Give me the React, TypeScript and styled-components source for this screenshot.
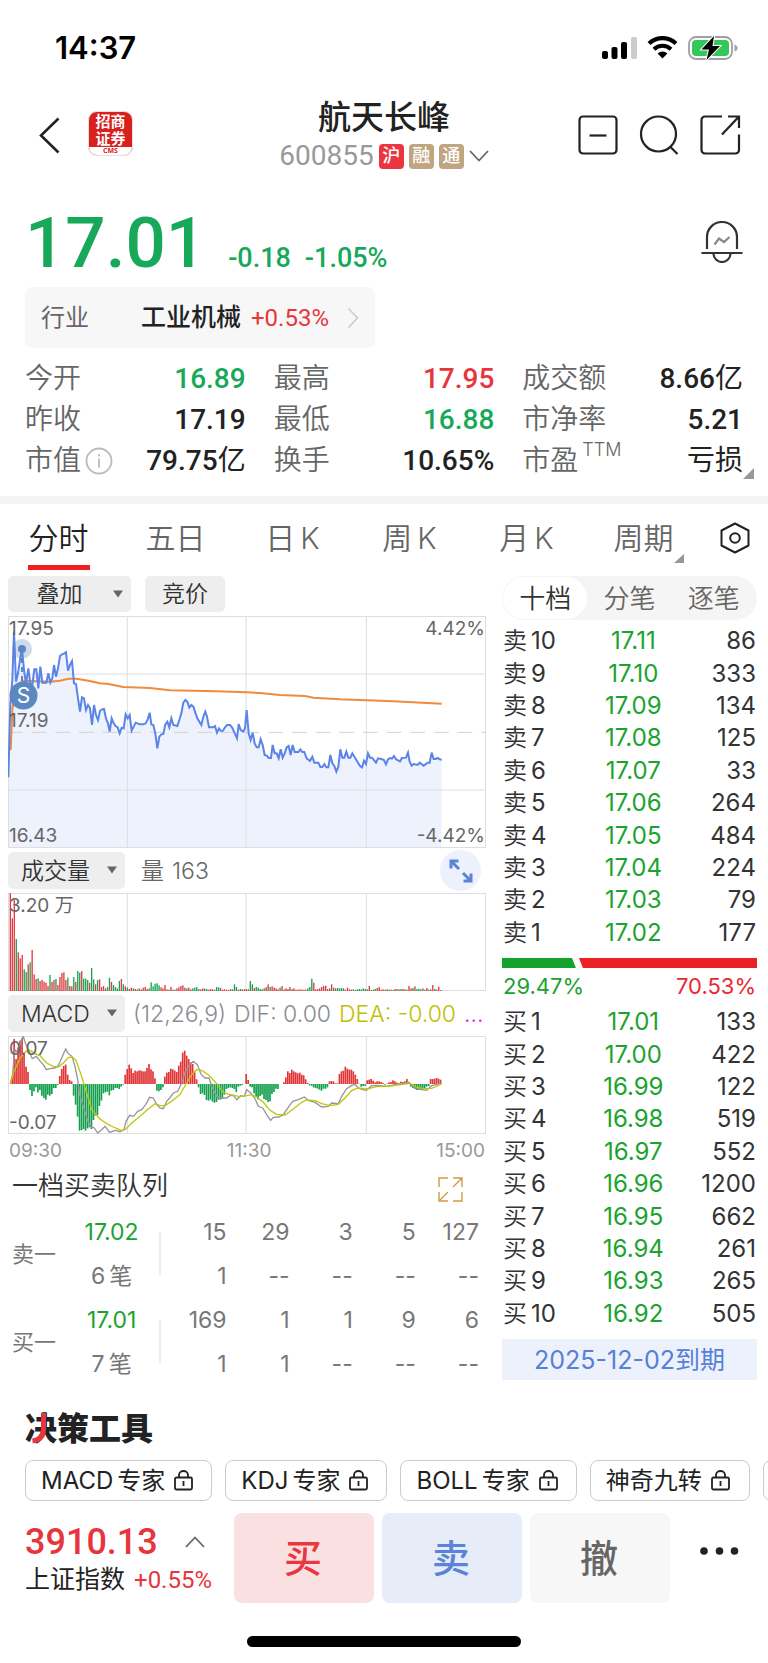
import React from "react";
import styled, { createGlobalStyle, css } from "styled-components";

const GREEN = "#17a85a";
const BOOK_GREEN = "#1ba32f";
const RED = "#e8353c";
const INK = "#222222";
const MUTED = "#666666";
const CJK = `"Noto Sans CJK SC", sans-serif`;
const UI = `Inter, ${CJK}`;
const QUOTE = `Roboto, ${CJK}`;

const Global = createGlobalStyle`
  *, *::before, *::after { box-sizing: border-box; }
  body { margin: 0; background: #fff; color: ${INK}; font-family: ${QUOTE}; }
  button, select { font: inherit; color: inherit; border: 0; background: none; padding: 0; margin: 0; cursor: pointer; }
  svg { display: block; flex: none; }
  a { color: inherit; text-decoration: none; }
  table { border-collapse: collapse; width: 100%; }
  td, th { padding: 0; font-weight: 400; }
`;

const Page = styled.main`
  width: 100%;
  overflow: hidden;
  background: #fff;
`;

/* ---------- status bar and header ---------- */

const StatusBar = styled.div`
  display: flex;
  align-items: center;
  justify-content: space-between;
  height: 95px;
  padding: 0 30px 0 55px;
  font: 600 31px/36px ${UI};
  color: #000;
`;

const StatusIcons = styled.div`
  display: flex;
  align-items: center;
  gap: 10px;
`;

const Header = styled.header`
  display: grid;
  grid-template-columns: 1fr auto 1fr;
  align-items: center;
  height: 80px;
`;

const HeaderLeft = styled.div`
  display: flex;
  align-items: center;
  gap: 28px;
  padding-left: 39px;
`;

const HeaderMiddle = styled.div`
  padding-top: 4px;
`;

const HeaderRight = styled.div`
  display: flex;
  align-items: center;
  justify-content: flex-end;
  gap: 21px;
  padding-right: 27px;
`;

const Logo = styled.span`
  display: flex;
  flex-direction: column;
  width: 45px;
  height: 45px;
  margin-bottom: 3px;
  overflow: hidden;
  border: 1px solid #e6dede;
  border-radius: 9px;
  background: #d8201f;
  color: #fff;
  font: 700 15px/17px ${CJK};
  text-align: center;
`;

const LogoText = styled.span`
  flex: 1;
`;

const LogoFoot = styled.span`
  height: 8px;
  background: #fff;
  color: #d8201f;
  font: 700 7px/7px "Open Sans", sans-serif;
`;

const Title = styled.h1`
  margin: 0;
  font-size: 33px;
  line-height: 38px;
  font-weight: 500;
  text-align: center;
`;

const CodeRow = styled.button`
  display: flex;
  align-items: center;
  gap: 5px;
  height: 38px;
  color: #999;
  font-size: 28px;
  line-height: 36px;
`;

const Tag = styled.span<{ $red?: boolean }>`
  width: 25px;
  height: 25px;
  border-radius: 4px;
  background: ${(p) => (p.$red ? "#ea3640" : "#c0a582")};
  color: #fff;
  font-size: 18px;
  line-height: 24px;
  font-weight: 500;
  text-align: center;
`;

/* ---------- quote ---------- */

const PriceRow = styled.section`
  display: flex;
  align-items: baseline;
  gap: 14px;
  padding: 28px 25px 4px;
  color: ${GREEN};
  font-weight: 500;
  font-size: 27px;
  line-height: 40px;
`;

const Price = styled.span`
  margin-right: 8px;
  font-size: 71px;
  line-height: 80px;
`;

const BellButton = styled.button`
  align-self: flex-end;
  margin-left: auto;
  padding-bottom: 20px;
`;

const Industry = styled.a`
  display: flex;
  align-items: center;
  width: 350px;
  height: 61px;
  margin-left: 25px;
  padding: 0 16px;
  border-radius: 8px;
  background: #f7f7f7;
  font-size: 24px;
  line-height: 36px;
`;

const IndustryLabel = styled.span`
  flex: 1;
  color: ${MUTED};
`;

const Strong = styled.span`
  font-size: 25px;
  font-weight: 500;
`;

const Gain = styled.span`
  margin: 0 18px 0 10px;
  color: ${RED};
`;

const Stats = styled.dl`
  display: grid;
  grid-template-columns: repeat(3, 1fr);
  column-gap: 28px;
  margin: 0;
  padding: 10px 25px 15px;
  font-size: 28px;
  line-height: 41px;
`;

const Stat = styled.div`
  position: relative;
  display: flex;
  justify-content: space-between;
  height: 41px;
  white-space: nowrap;
`;

const StatLabel = styled.dt`
  display: flex;
  align-items: center;
  gap: 4px;
  color: ${MUTED};
  font-weight: 350;
`;

const StatValue = styled.dd<{ $color?: string }>`
  margin: 0;
  font-weight: 500;
  color: ${(p) => p.$color ?? INK};
`;

const Thin = styled.span`
  font-weight: 400;
`;

const Super = styled.sup`
  align-self: flex-start;
  font: 300 18px/20px ${UI};
`;

const Corner = styled.svg`
  position: absolute;
  right: -11px;
  bottom: 2px;
`;

/* ---------- period tabs ---------- */

const Tabs = styled.nav`
  display: flex;
  height: 76px;
  border-top: 8px solid #f4f4f4;
`;

const Tab = styled.button<{ $active?: boolean }>`
  position: relative;
  flex: 1;
  color: ${(p) => (p.$active ? INK : MUTED)};
  font: 350 30px/40px ${UI};
  ${(p) =>
    p.$active &&
    css`
      &::after {
        content: "";
        position: absolute;
        left: calc(50% - 31px);
        bottom: 2px;
        width: 62px;
        height: 5px;
        background: #f02020;
      }
    `}
`;

const TabMark = styled.svg`
  position: absolute;
  right: 18px;
  bottom: 9px;
`;

const GapK = styled.span`
  margin-left: 5px;
`;

const SettingsButton = styled.button`
  display: flex;
  justify-content: center;
  align-items: center;
  width: 66px;
`;

/* ---------- chart side ---------- */

const Body = styled.section`
  display: grid;
  grid-template-columns: 478fr 255fr;
  column-gap: 16px;
  padding: 4px 11px 0 8px;
`;

const Column = styled.div`
  min-width: 0;
`;

const ToolRow = styled.div`
  display: flex;
  align-items: center;
  gap: 14px;
  height: 36px;
  margin-bottom: 4px;
  color: ${MUTED};
  font: 350 23px/36px ${UI};
  white-space: nowrap;
`;

const SubToolRow = styled(ToolRow)`
  height: 37px;
  margin-top: 4px;
  gap: 8px;
`;

const Picker = styled.span<{ $w: number }>`
  position: relative;
  display: block;
  width: ${(p) => p.$w}px;
  height: 100%;
  flex: none;
  border-radius: 5px;
  background: #eee;
  color: #333;
  select {
    appearance: none;
    width: 100%;
    height: 100%;
    padding: 0 26px 0 13px;
    font: 350 23px/32px ${UI};
  }
  svg {
    position: absolute;
    right: 8px;
    top: 14px;
    pointer-events: none;
  }
`;

const CenteredPicker = styled(Picker)`
  select {
    padding: 0 30px 0 10px;
    text-align: center;
    text-align-last: center;
  }
`;

const GreyButton = styled.button`
  width: 80px;
  height: 100%;
  border-radius: 5px;
  background: #eee;
  color: #333;
`;

const VolumeNow = styled.span`
  display: flex;
  gap: 8px;
  padding-left: 8px;
`;

const ExpandButton = styled.button`
  display: flex;
  align-items: center;
  justify-content: center;
  width: 41px;
  height: 41px;
  margin: -2px 5px -2px auto;
  border-radius: 50%;
  background: #ecf1fc;
`;

const Legend = styled.span<{ $color: string }>`
  color: ${(p) => p.$color};
`;

const ChartBox = styled.div<{ $h: number }>`
  position: relative;
  height: ${(p) => p.$h}px;
`;

const Plot = styled.svg`
  width: 100%;
  height: 100%;
`;

const ChartLabel = styled.span<{ $top?: number; $bottom?: number; $right?: boolean }>`
  position: absolute;
  ${(p) => (p.$right ? "right: 1px;" : "left: 1px;")}
  ${(p) => (p.$bottom !== undefined ? `bottom: ${p.$bottom}px;` : `top: ${p.$top ?? 1}px;`)}
  color: ${MUTED};
  font: 400 19px/24px ${UI};
`;

const TradeMark = styled.svg`
  position: absolute;
  left: 0;
  top: 22px;
`;

const Axis = styled.div`
  display: flex;
  justify-content: space-between;
  height: 34px;
  padding: 0 1px;
  color: #999;
  font: 400 19px/34px ${UI};
`;

const QueueHead = styled.div`
  display: flex;
  justify-content: space-between;
  height: 42px;
  padding: 0 23px 0 4px;
`;

const QueueTitle = styled.h2`
  margin: 0;
  color: #333;
  font: 350 26px/32px ${CJK};
`;

const QueueTable = styled.table`
  width: calc(100% - 7px);
  table-layout: fixed;
  color: #777;
  font: 400 23px/44px ${UI};
  td {
    height: 44px;
    text-align: right;
  }
`;

const QueueSide = styled.th`
  padding-left: 4px;
  text-align: left;
  font-size: 22px;
`;

const QueueMid = styled.td<{ $green?: boolean }>`
  && {
    text-align: center;
  }
  color: ${(p) => (p.$green ? BOOK_GREEN : "inherit")};
`;

const Rule = styled.span`
  display: block;
  width: 2px;
  height: 44px;
  background: #eee;
`;

/* ---------- order book ---------- */

const Segments = styled.div`
  display: grid;
  grid-template-columns: repeat(3, 1fr);
  height: 44px;
  margin-bottom: 5px;
  padding: 1px;
  border-radius: 22px;
  background: #f5f5f5;
`;

const Segment = styled.button<{ $active?: boolean }>`
  padding-bottom: 2px;
  border-radius: 21px;
  background: ${(p) => (p.$active ? "#fff" : "transparent")};
  color: ${(p) => (p.$active ? "#333" : MUTED)};
  font: 350 26px/36px ${CJK};
`;

const BookTable = styled.table`
  table-layout: fixed;
  height: 324px;
  color: #333;
  font: 400 24px/32px ${UI};
`;

const Side = styled.th`
  width: 34%;
  padding-left: 1px;
  text-align: left;
  font-weight: 350;
`;

const Num = styled.span`
  margin-left: 4px;
  font-weight: 400;
`;

const BookPrice = styled.td`
  width: 35%;
  color: ${BOOK_GREEN};
  text-align: center;
`;

const Qty = styled.td`
  padding-right: 1px;
  text-align: right;
`;

const Ratio = styled.div`
  display: flex;
  gap: 3px;
  height: 10px;
  margin-top: 9px;
`;

const SellShare = styled.span`
  width: 29%;
  background: #16a12c;
  clip-path: polygon(0 0, calc(100% - 4px) 0, 100% 100%, 0 100%);
`;

const BuyShare = styled.span`
  flex: 1;
  background: #ea2024;
  clip-path: polygon(0 0, 100% 0, 100% 100%, 4px 100%);
`;

const RatioText = styled.div`
  display: flex;
  justify-content: space-between;
  height: 38px;
  padding: 0 1px;
  font: 400 22px/36px ${UI};
`;

const Tone = styled.span<{ $c: string }>`
  color: ${(p) => p.$c};
`;

const Expiry = styled.button`
  display: block;
  width: 100%;
  height: 41px;
  margin-top: 9px;
  background: #ecf1fc;
  color: #5780d8;
  font: 400 25px/36px ${UI};
`;

/* ---------- tools and trade bar ---------- */

const ToolsTitle = styled.h2`
  position: relative;
  margin: 22px 0 16px;
  padding-left: 25px;
  font: 900 32px/36px ${CJK};
`;

const Accent = styled.svg`
  position: absolute;
  left: 31px;
  top: 5px;
`;

const Chips = styled.div`
  display: flex;
  gap: 13px;
  padding-left: 25px;
  overflow: hidden;
`;

const Chip = styled.button`
  display: flex;
  align-items: center;
  flex: none;
  gap: 9px;
  min-width: 160px;
  height: 41px;
  padding: 0 18px 0 15px;
  border: 1px solid #ccc;
  border-radius: 8px;
  font: 400 24px/36px ${UI};
  white-space: nowrap;
`;

const ChipText = styled.span`
  display: flex;
  gap: 4px;
`;

const TradeBar = styled.footer`
  display: flex;
  gap: 8px;
  height: 90px;
  margin-top: 12px;
`;

const IndexLink = styled.a`
  flex: none;
  width: 226px;
  padding: 8px 0 0 25px;
`;

const IndexTop = styled.span`
  display: flex;
  align-items: center;
  gap: 27px;
  height: 42px;
  color: ${RED};
  font-size: 36px;
  line-height: 42px;
  font-weight: 500;
`;

const IndexBottom = styled.span`
  display: flex;
  gap: 9px;
  font-size: 24px;
  line-height: 34px;
`;

const IndexName = styled.span`
  font-size: 25px;
`;

const TradeButton = styled.button<{ $bg: string; $fg: string }>`
  flex: 1;
  padding: 0 2px 4px 0;
  border-radius: 8px;
  background: ${(p) => p.$bg};
  color: ${(p) => p.$fg};
  font: 500 38px/48px ${CJK};
`;

const MoreButton = styled.button`
  display: flex;
  align-items: center;
  justify-content: center;
  width: 90px;
  padding: 0 8px 14px 0;
`;

const HomeBar = styled.div`
  width: 274px;
  height: 11px;
  margin: 33px auto 16px;
  border-radius: 6px;
  background: #000;
`;

/* ---------- data ---------- */

type Pt = [number, number];

const toPoints = (pts: Pt[]) => pts.map(([x, y]) => `${x},${y}`).join(" ");
const pairs = (s: string, dx: number, dy: number): Pt[] =>
  s
    .trim()
    .split(/\s+/)
    .map((p) => {
      const [x, y] = p.split(",").map(Number);
      return [x + dx, y + dy] as Pt;
    });

const priceLine: Pt[] = [
  ...pairs(
    `25,502 31,280 37,210 42,65 48,215 54,190 60,150 66,115 72,180 78,222 85,175 91,220 97,225 103,178 109,178 115,235
     121,170 127,218 139,218 145,190 151,218 157,205 162,165 168,200 174,175 180,138 186,133 192,131 198,127 204,182
     210,165 216,153 222,220 228,222 234,265 240,305 246,262 252,265 258,300 264,285 270,295 276,345 282,285 288,315
     294,330 300,303 306,298 312,297 318,325 324,340 329,365 335,325 341,340 347,348 353,352 359,370 365,353 371,355
     377,313 383,325 389,315 395,362 401,350 407,338 419,343 431,343 437,340 443,328 449,308 454,343 460,345 466,370
     472,415 478,380 484,373 490,372 496,343 502,335 508,352 514,325 520,345 532,348 538,330 544,310 550,278 556,270
     562,275 568,293 574,285 580,290 586,308 592,325 598,335 604,345 610,320 616,305 621,320 627,352 639,352 645,348
     651,368 657,355 663,363 669,362 675,352 681,345 690,345 696,352 702,365 711,385 716,342 722,360 730,365 735,355`,
    -24,
    -18
  ),
  ...pairs(
    `20,300 26,370 32,390 38,368 44,400 50,412 56,412 62,388 68,405 74,435 80,437 86,444 93,444 98,405 104,430 110,430
     116,445 122,418 128,443 134,430 140,412 146,408 152,435 158,405 164,426 175,426 181,418 187,426 193,426 200,445
     210,453 217,440 223,458 235,458 241,471 247,471 253,462 259,472 265,472 271,435 277,460 283,468 289,485 295,470
     301,418 307,443 313,443 319,425 325,443 331,443 337,430 349,450 360,468 366,472 372,452 378,462 384,430 390,443
     396,443 408,458 414,445 426,448 432,450 438,463 444,448 450,444 456,446 462,438 468,448 480,454 486,444 498,443
     504,428 509,455 515,467 521,462 533,465 539,458 551,467 563,458 569,458 575,428 581,447 587,447 593,444 599,448 605,449`,
    696,
    -18
  ),
];

const averageLine: Pt[] = pairs(
  `32,420 37,300 45,235 60,218 70,212 150,215 180,212 205,206 230,206 265,212 300,220 325,222 370,231 450,234 510,241
   650,244 740,247 780,249 840,255 915,258 940,263 1020,268 1100,271 1180,274 1325,281`,
  -24,
  -18
);

const difLine: Pt[] = [
  ...pairs(
    `31,700 37,680 45,600 55,610 62,575 70,560 76,580 85,600 97,627 109,620 121,635 130,645 139,660 150,657 165,655
     175,648 185,625 197,598 205,612 216,620 225,650 233,690 239,735 250,770 262,810 272,830 283,835 293,850 305,840
     315,830 329,848 345,842 360,846 372,840 378,815 389,797 401,800 413,785 425,780 437,765 449,743 460,745 470,765
     480,775 490,777 500,755 509,745 520,730 533,725 545,700 556,665 568,645 580,635 592,645 604,675 615,685 627,685
     637,715 650,740 665,745 680,745 690,738 700,737 711,750 722,738 733,740`,
    -24,
    -559
  ),
  ...pairs(
    `20,630 32,640 44,655 55,680 68,685 80,705 92,722 100,713 116,712 130,705 140,690 158,665 175,660 193,652 205,662
     225,668 245,682 265,680 275,670 295,672 305,650 320,627 335,617 345,614 355,625 367,630 379,632 395,618 410,617
     440,620 470,614 505,608 520,622 535,628 560,632 575,618 590,614 605,610`,
    696,
    -469
  ),
];

const deaLine: Pt[] = [
  ...pairs(
    `31,703 40,670 60,625 78,605 90,602 105,612 120,618 140,640 160,650 175,652 190,640 205,624 217,622 228,632 245,680
     260,730 275,780 300,808 320,822 340,832 365,843 378,838 395,820 420,800 445,778 465,762 480,768 495,768 510,758
     540,735 560,700 575,675 590,660 605,662 625,675 650,702 670,728 690,735 720,741`,
    -24,
    -559
  ),
  ...pairs(
    `20,648 35,645 50,652 70,668 90,692 110,704 135,706 160,688 185,668 200,661 225,663 245,672 270,678 295,674 315,655
     335,633 355,625 380,628 410,621 450,619 510,611 530,622 550,627 575,626 605,613`,
    696,
    -469
  ),
];

/* One bar a minute; a negative volume is a falling minute. */
const volumes = [
  294, 218, 273, -156, 116, 98, 108, -65, -57, 80, -86, 123, 50, 36, -38, 30, 33, 28, 25, 15, -48, 27, 33, -36, 18, 42,
  54, 56, 33, -40, 15, 14, -42, 27, -60, -55, 60, -37, -37, -33, 25, -69, -35, 20, -33, 35, 12, 15, 8, -12, -40, 27,
  -18, -12, -8, -30, 36, -20, 14, -10, 6, 10, -8, 6, 5, -8, 5, 10, 12, 6, -8, -26, -14, -22, -23, -17, 11, 8, 18, 5, -4,
  12, 4, -4, 8, 11, 15, 17, 10, -8, 10, 5, -8, -10, -12, -6, 5, 8, -7, -6, 4, 6, 5, -4, -12, -11, 9, 4, 5, 4, 3, -6,
  5, -20, -12, 4, -6, 5, -5, 6, 5, -30, -20, 9, -12, -10, -6, 5, -8, 12, 20, -12, 14, 10, 8, 5, -10, 15, 5, 8, 6, 12,
  -6, 8, 4, 4, 5, 4, 4, 4, -8, -12, -37, 25, 5, 6, 8, 12, 15, 16, -6, 8, 20, -10, 8, -9, -8, -9, -8, 4, 10, 5, 4, -5, 3,
  -5, -6, -5, -8, -6, 5, 15, -3, -4, -6, 9, 12, 4, 5, -4, 5, -4, 4, -3, 6, -6, 5, -6, 6, 5, -4, 15, 8, -9, 14, -6, -7,
  5, -8, 4, 9, -4, 5, 18, -6, 4, 13, 3,
];

const macdBars = [
  0, 22, 135, 75, 110, 130, 138, 93, 52, 36, -18, -36, -22, -10, -25, -18, -35, -42, -47, -32, -35, -30, -12, -12, -3,
  24, 45, 54, 58, 28, 12, 8, -35, -62, -98, -140, -138, -135, -140, -133, -130, -135, -108, -95, -93, -66, -50, -28,
  -25, -23, -34, -20, -18, -12, -12, -15, -8, -2, 28, 45, 58, 47, 33, 40, 38, 41, 40, 38, 38, 48, 60, 44, 38, 17, -20,
  -22, -18, -10, 22, 34, 36, 46, 44, 40, 36, 55, 67, 94, 100, 85, 75, 65, 60, 36, 14, -10, -30, -28, -33, -48, -50, -47,
  -53, -56, -54, -47, -47, -43, -32, -15, -12, -10, -12, -15, -24, -8, -5, -3, 0, 30, 12, -8, -10, -28, -38, -46, -36,
  -32, -45, -48, -54, -52, -30, -24, -14, -15, 0, 0, 5, 20, 38, 33, 43, 38, 35, 32, 34, 28, 26, 14, 3, -4, -5, -10, -12,
  -14, -17, -20, -14, -14, -10, 8, 9, 8, 2, 2, 30, 38, 40, 52, 46, 43, 43, 38, 28, 15, 1, -8, -6, -5, 11, 13, 15, 10, 5,
  8, 8, 6, 3, -2, 1, 5, 6, 11, 8, 4, 3, 7, 6, 8, 15, 5, -8, -12, -15, -18, -17, -15, -15, -13, -8, -6, 15, 15, 16, 18,
  16, 13,
];

const STEP = 5.95;

const sells: [string, string, string][] = [
  ["10", "17.11", "86"],
  ["9", "17.10", "333"],
  ["8", "17.09", "134"],
  ["7", "17.08", "125"],
  ["6", "17.07", "33"],
  ["5", "17.06", "264"],
  ["4", "17.05", "484"],
  ["3", "17.04", "224"],
  ["2", "17.03", "79"],
  ["1", "17.02", "177"],
];

const buys: [string, string, string][] = [
  ["1", "17.01", "133"],
  ["2", "17.00", "422"],
  ["3", "16.99", "122"],
  ["4", "16.98", "519"],
  ["5", "16.97", "552"],
  ["6", "16.96", "1200"],
  ["7", "16.95", "662"],
  ["8", "16.94", "261"],
  ["9", "16.93", "265"],
  ["10", "16.92", "505"],
];

const queues = [
  { side: "卖一", price: "17.02", count: "6", a: ["15", "29", "3", "5", "127"], b: ["1", "--", "--", "--", "--"] },
  { side: "买一", price: "17.01", count: "7", a: ["169", "1", "1", "9", "6"], b: ["1", "1", "--", "--", "--"] },
];

/* ---------- small parts ---------- */

const Grid = ({ h, rows }: { h: number; rows?: boolean }) => (
  <g stroke="#dedee2" strokeWidth="3" fill="none">
    <rect x="1.5" y="1.5" width="1431" height={h - 3} />
    <path d={`M358 0V${h}M714 0V${h}M1075 0V${h}`} />
    {rows && <path d="M0 174H1434M0 522H1434" />}
    {rows && <path d="M0 349H1434" stroke="#d2d2d6" strokeDasharray="44 27" />}
  </g>
);

const Arrow = () => (
  <svg width="10" height="8" viewBox="0 0 10 8">
    <path d="M0 0.5H10L5 7.5Z" fill="#666" />
  </svg>
);

const Lock = () => (
  <svg width="19" height="21" viewBox="0 0 19 21" fill="none" stroke="#222" strokeWidth="1.8">
    <rect x="1" y="7.5" width="17" height="12" rx="1.5" />
    <path d="M5 7.5V5a4.5 4 0 0 1 9 0v2.5M9.5 11v5" />
  </svg>
);

const Book = ({ name, rows }: { name: string; rows: [string, string, string][] }) => (
  <BookTable>
    <tbody>
      {rows.map(([n, price, qty]) => (
        <tr key={n}>
          <Side scope="row">
            {name}
            <Num>{n}</Num>
          </Side>
          <BookPrice>{price}</BookPrice>
          <Qty>{qty}</Qty>
        </tr>
      ))}
    </tbody>
  </BookTable>
);

const tools: [string, string][] = [
  ["MACD", "专家"],
  ["KDJ", "专家"],
  ["BOLL", "专家"],
  ["", "神奇九转"],
];

export default function App() {
  return (
    <Page>
      <Global />
      <StatusBar>
        <span>14:37</span>
        <StatusIcons>
          <svg width="35" height="22" viewBox="0 0 35 22">
            <rect x="0" y="14" width="6" height="8" rx="2" />
            <rect x="9.500" y="10" width="6" height="12" rx="2" />
            <rect x="19" y="5" width="6" height="17" rx="2" />
            <rect x="29" y="0" width="6" height="22" rx="2" fill="#ccc" />
          </svg>
          <svg width="31" height="23" viewBox="0 0 31 23">
            <path d="M2 7.500a19.500 19.500 0 0 1 27 0" fill="none" stroke="#000" strokeWidth="4.200" />
            <path d="M7 13.200a12.300 12.300 0 0 1 17 0" fill="none" stroke="#000" strokeWidth="4" />
            <path d="M15.500 22.500L10.600 17.500a7 7 0 0 1 9.800 0Z" />
          </svg>
          <svg width="50" height="24" viewBox="0 0 50 24">
            <rect x="1" y="1" width="43" height="22" rx="7" fill="none" stroke="#a0a0a0" strokeWidth="1.800" />
            <path d="M46.500 8.500q3 1 3 3.500t-3 3.500Z" fill="#a0a0a0" />
            <rect x="4" y="4" width="37" height="16" rx="4" fill="#34c759" />
            <path d="M26 0L13.500 13.500H21L18.500 24L32 10H24.500Z" fill="#000" stroke="#fff" strokeWidth="2" paintOrder="stroke" />
          </svg>
        </StatusIcons>
      </StatusBar>

      <Header>
        <HeaderLeft>
          <button aria-label="返回">
            <svg width="21" height="37" viewBox="0 0 21 37" fill="none" stroke="#222" strokeWidth="2.600">
              <path d="M19.500 1.500L2 18.500L19.500 35.500" />
            </svg>
          </button>
          <Logo>
            <LogoText>
              招商
              <br />
              证券
            </LogoText>
            <LogoFoot>CMS</LogoFoot>
          </Logo>
        </HeaderLeft>
        <HeaderMiddle>
          <Title>航天长峰</Title>
          <CodeRow>
            <span>600855</span>
            <Tag $red>沪</Tag>
            <Tag>融</Tag>
            <Tag>通</Tag>
            <svg width="20" height="12" viewBox="0 0 20 12" fill="none" stroke="#666" strokeWidth="1.800">
              <path d="M1 1L10 10.500L19 1" />
            </svg>
          </CodeRow>
        </HeaderMiddle>
        <HeaderRight>
          <button aria-label="移除自选">
            <svg width="40" height="40" viewBox="0 0 40 40" fill="none" stroke="#222" strokeWidth="2.200">
              <rect x="1.500" y="1.500" width="37" height="37" rx="3.500" />
              <path d="M11.500 20.500H28.500" />
            </svg>
          </button>
          <button aria-label="搜索">
            <svg width="40" height="40" viewBox="0 0 40 40" fill="none" stroke="#222" strokeWidth="2.200">
              <circle cx="19.500" cy="19" r="17.500" />
              <path d="M31 31.500L38.500 39" />
            </svg>
          </button>
          <button aria-label="分享">
            <svg width="41" height="40" viewBox="0 0 41 40" fill="none" stroke="#222" strokeWidth="2.200">
              <path d="M22 1.500H5A3.500 3.500 0 0 0 1.500 5V35A3.500 3.500 0 0 0 5 38.500H35.500A3.500 3.500 0 0 0 39 35V19.500" />
              <path d="M28 1.500H39V13M38.500 2L22 19.500" />
            </svg>
          </button>
        </HeaderRight>
      </Header>

      <PriceRow>
        <Price>17.01</Price>
        <span>-0.18</span>
        <span>-1.05%</span>
        <BellButton aria-label="预警">
          <svg width="42" height="42" viewBox="0 0 42 42" fill="none" stroke="#333" strokeWidth="2.200">
            <path d="M6 28V16a15 15 0 0 1 30 0V28M0.500 32H41.500M12.500 32.500a8.500 8.500 0 0 0 17 0" />
            <path d="M13.500 23.500L18 17.500L23 21L28.500 16" stroke="#888" />
          </svg>
        </BellButton>
      </PriceRow>

      <Industry href="#industry">
        <IndustryLabel>行业</IndustryLabel>
        <Strong>工业机械</Strong>
        <Gain>+0.53%</Gain>
        <svg width="12" height="22" viewBox="0 0 12 22" fill="none" stroke="#ccc" strokeWidth="1.600">
          <path d="M1.500 1.500L10.500 11L1.500 20.500" />
        </svg>
      </Industry>

      <Stats>
        <Stat>
          <StatLabel>今开</StatLabel>
          <StatValue $color={GREEN}>16.89</StatValue>
        </Stat>
        <Stat>
          <StatLabel>最高</StatLabel>
          <StatValue $color={RED}>17.95</StatValue>
        </Stat>
        <Stat>
          <StatLabel>成交额</StatLabel>
          <StatValue>
            8.66<Thin>亿</Thin>
          </StatValue>
        </Stat>
        <Stat>
          <StatLabel>昨收</StatLabel>
          <StatValue>17.19</StatValue>
        </Stat>
        <Stat>
          <StatLabel>最低</StatLabel>
          <StatValue $color={GREEN}>16.88</StatValue>
        </Stat>
        <Stat>
          <StatLabel>市净率</StatLabel>
          <StatValue>5.21</StatValue>
        </Stat>
        <Stat>
          <StatLabel>
            市值
            <svg width="28" height="28" viewBox="0 0 28 28" fill="none" stroke="#bbb" strokeWidth="1.800">
              <circle cx="14" cy="14" r="12.500" />
              <path d="M14 11.500V20.500M14 7V9.500" />
            </svg>
          </StatLabel>
          <StatValue>
            79.75<Thin>亿</Thin>
          </StatValue>
        </Stat>
        <Stat>
          <StatLabel>换手</StatLabel>
          <StatValue>10.65%</StatValue>
        </Stat>
        <Stat>
          <StatLabel>
            市盈<Super>TTM</Super>
          </StatLabel>
          <StatValue>
            <Thin>亏损</Thin>
          </StatValue>
          <Corner width="11" height="11" viewBox="0 0 11 11">
            <path d="M11 0V11H0Z" fill="#999" />
          </Corner>
        </Stat>
      </Stats>

      <Tabs>
        <Tab $active>分时</Tab>
        <Tab>五日</Tab>
        <Tab>
          日<GapK>K</GapK>
        </Tab>
        <Tab>
          周<GapK>K</GapK>
        </Tab>
        <Tab>
          月<GapK>K</GapK>
        </Tab>
        <Tab>
          周期
          <TabMark width="10" height="9" viewBox="0 0 10 9">
            <path d="M10 0V9H0Z" fill="#9298a0" />
          </TabMark>
        </Tab>
        <SettingsButton aria-label="图表设置">
          <svg width="30" height="32" viewBox="0 0 30 32" fill="none" stroke="#222" strokeWidth="2">
            <path d="M15 1.500L28.500 8.500V23.500L15 30.500L1.500 23.500V8.500Z" strokeLinejoin="round" />
            <circle cx="15" cy="16" r="4.800" />
          </svg>
        </SettingsButton>
      </Tabs>

      <Body>
        <Column>
          <ToolRow>
            <CenteredPicker $w={123}>
              <select aria-label="叠加">
                <option>叠加</option>
              </select>
              <Arrow />
            </CenteredPicker>
            <GreyButton>竞价</GreyButton>
          </ToolRow>
          <ChartBox $h={232}>
            <Plot viewBox="0 0 1434 696" preserveAspectRatio="none" aria-label="分时走势">
              <polygon points={`0,696 ${toPoints(priceLine)} 1301,696`} fill="#eef2fd" />
              <Grid h={696} rows />
              <polyline points={toPoints(averageLine)} fill="none" stroke="#f08a3c" strokeWidth="6" />
              <polyline points={toPoints(priceLine)} fill="none" stroke="#5b84e8" strokeWidth="6" />
            </Plot>
            <TradeMark width="34" height="76" viewBox="0 0 34 76">
              <path d="M14 11V48" stroke="#5b88c0" strokeWidth="2" strokeDasharray="5 4" />
              <circle cx="14" cy="11" r="10" fill="#5b88c0" fillOpacity="0.3" />
              <circle cx="14" cy="11" r="4" fill="#5b88c0" />
              <circle cx="15.500" cy="57.500" r="14" fill="#5b88c0" />
              <text x="15.500" y="65" textAnchor="middle" fontFamily="Inter, sans-serif" fontSize="21" fill="#fff">
                S
              </text>
            </TradeMark>
            <ChartLabel>17.95</ChartLabel>
            <ChartLabel $top={93}>17.19</ChartLabel>
            <ChartLabel $bottom={0}>16.43</ChartLabel>
            <ChartLabel $right>4.42%</ChartLabel>
            <ChartLabel $right $bottom={0}>
              -4.42%
            </ChartLabel>
          </ChartBox>

          <SubToolRow>
            <Picker $w={117}>
              <select aria-label="副图一">
                <option>成交量</option>
              </select>
              <Arrow />
            </Picker>
            <VolumeNow>
              <span>量</span>
              <span>163</span>
            </VolumeNow>
            <ExpandButton aria-label="全屏">
              <svg width="24" height="24" viewBox="0 0 24 24" fill="none" stroke="#5b84d8" strokeWidth="3">
                <path d="M2 9.500V2H9.500M2.500 2.500L10 10M22 14.500V22H14.500M21.500 21.500L14 14" />
              </svg>
            </ExpandButton>
          </SubToolRow>
          <ChartBox $h={98}>
            <Plot viewBox="0 0 1434 294" preserveAspectRatio="none" aria-label="成交量">
              <Grid h={294} />
              {volumes.map((v, i) => (
                <rect
                  key={i}
                  x={5 + i * STEP}
                  y={294 - Math.abs(v)}
                  width="4"
                  height={Math.abs(v)}
                  fill={v > 0 ? "#e23a3e" : "#17a351"}
                />
              ))}
            </Plot>
            <ChartLabel>3.20 万</ChartLabel>
          </ChartBox>

          <SubToolRow>
            <Picker $w={117}>
              <select aria-label="副图二">
                <option>MACD</option>
              </select>
              <Arrow />
            </Picker>
            <Legend $color="#8c8c92">(12,26,9)</Legend>
            <Legend $color="#8c8c92">DIF: 0.00</Legend>
            <Legend $color="#bfbf00">DEA: -0.00</Legend>
            <Legend $color="#e815e8">...</Legend>
          </SubToolRow>
          <ChartBox $h={98}>
            <Plot viewBox="0 0 1434 294" preserveAspectRatio="none" aria-label="MACD">
              <Grid h={294} />
              {macdBars.map((v, i) => (
                <rect
                  key={i}
                  x={4 + i * STEP}
                  y={v > 0 ? 144 - v : 144}
                  width="5"
                  height={Math.abs(v)}
                  fill={v > 0 ? "#e23434" : "#12a04c"}
                />
              ))}
              <polyline points={toPoints(difLine)} fill="none" stroke="#97979b" strokeWidth="4" />
              <polyline points={toPoints(deaLine)} fill="none" stroke="#c2c40e" strokeWidth="4" />
            </Plot>
            <ChartLabel>0.07</ChartLabel>
            <ChartLabel $bottom={-1}>-0.07</ChartLabel>
          </ChartBox>
          <Axis>
            <span>09:30</span>
            <span>11:30</span>
            <span>15:00</span>
          </Axis>

          <QueueHead>
            <QueueTitle>一档买卖队列</QueueTitle>
            <button aria-label="展开队列">
              <svg width="25" height="25" viewBox="0 0 25 25" fill="none" stroke="#cf9a4c" strokeWidth="1.400">
                <path d="M1 10V1H10M15 1H24V10M24 15V24H15M10 24H1V15M15 10L24 1M10 15L1 24" />
              </svg>
            </button>
          </QueueHead>
          <QueueTable>
            <colgroup>
              <col style={{ width: "12%" }} />
              <col style={{ width: "20%" }} />
              <col style={{ width: "1%" }} />
            </colgroup>
            {queues.map((q) => (
              <tbody key={q.side}>
                <tr>
                  <QueueSide scope="rowgroup" rowSpan={2}>
                    {q.side}
                  </QueueSide>
                  <QueueMid $green>{q.price}</QueueMid>
                  <td rowSpan={2}>
                    <Rule />
                  </td>
                  {q.a.map((v, i) => (
                    <td key={i}>{v}</td>
                  ))}
                </tr>
                <tr>
                  <QueueMid>
                    {q.count}
                    <Num>笔</Num>
                  </QueueMid>
                  {q.b.map((v, i) => (
                    <td key={i}>{v}</td>
                  ))}
                </tr>
              </tbody>
            ))}
          </QueueTable>
        </Column>

        <Column>
          <Segments>
            <Segment $active>十档</Segment>
            <Segment>分笔</Segment>
            <Segment>逐笔</Segment>
          </Segments>
          <Book name="卖" rows={sells} />
          <Ratio>
            <SellShare />
            <BuyShare />
          </Ratio>
          <RatioText>
            <Tone $c={BOOK_GREEN}>29.47%</Tone>
            <Tone $c="#ea2830">70.53%</Tone>
          </RatioText>
          <Book name="买" rows={buys} />
          <Expiry>2025-12-02到期</Expiry>
        </Column>
      </Body>

      <ToolsTitle>
        决策工具
        <Accent width="18" height="31" viewBox="0 0 18 31" fill="none" stroke="#ee3340" strokeWidth="5">
          <path d="M12.500 0V16C12.500 23 9 27 1.500 28" />
        </Accent>
      </ToolsTitle>
      <Chips>
        {tools.map(([latin, cjk]) => (
          <Chip key={latin + cjk}>
            <ChipText>
              {latin && <span>{latin}</span>}
              <span>{cjk}</span>
            </ChipText>
            <Lock />
          </Chip>
        ))}
        <Chip aria-label="更多工具" />
      </Chips>

      <TradeBar>
        <IndexLink href="#index">
          <IndexTop>
            3910.13
            <svg width="20" height="12" viewBox="0 0 20 12" fill="none" stroke="#666" strokeWidth="1.800">
              <path d="M1 11L10 1.500L19 11" />
            </svg>
          </IndexTop>
          <IndexBottom>
            <IndexName>上证指数</IndexName>
            <Tone $c={RED}>+0.55%</Tone>
          </IndexBottom>
        </IndexLink>
        <TradeButton $bg="#fbe0e1" $fg="#ea3640">
          买
        </TradeButton>
        <TradeButton $bg="#e6ecf8" $fg="#5b84d8">
          卖
        </TradeButton>
        <TradeButton $bg="#f7f7f7" $fg="#666">
          撤
        </TradeButton>
        <MoreButton aria-label="更多">
          <svg width="39" height="8" viewBox="0 0 39 8" fill="#222">
            <circle cx="4" cy="4" r="3.800" />
            <circle cx="19.500" cy="4" r="3.800" />
            <circle cx="34.500" cy="4" r="3.800" />
          </svg>
        </MoreButton>
      </TradeBar>
      <HomeBar />
    </Page>
  );
}
